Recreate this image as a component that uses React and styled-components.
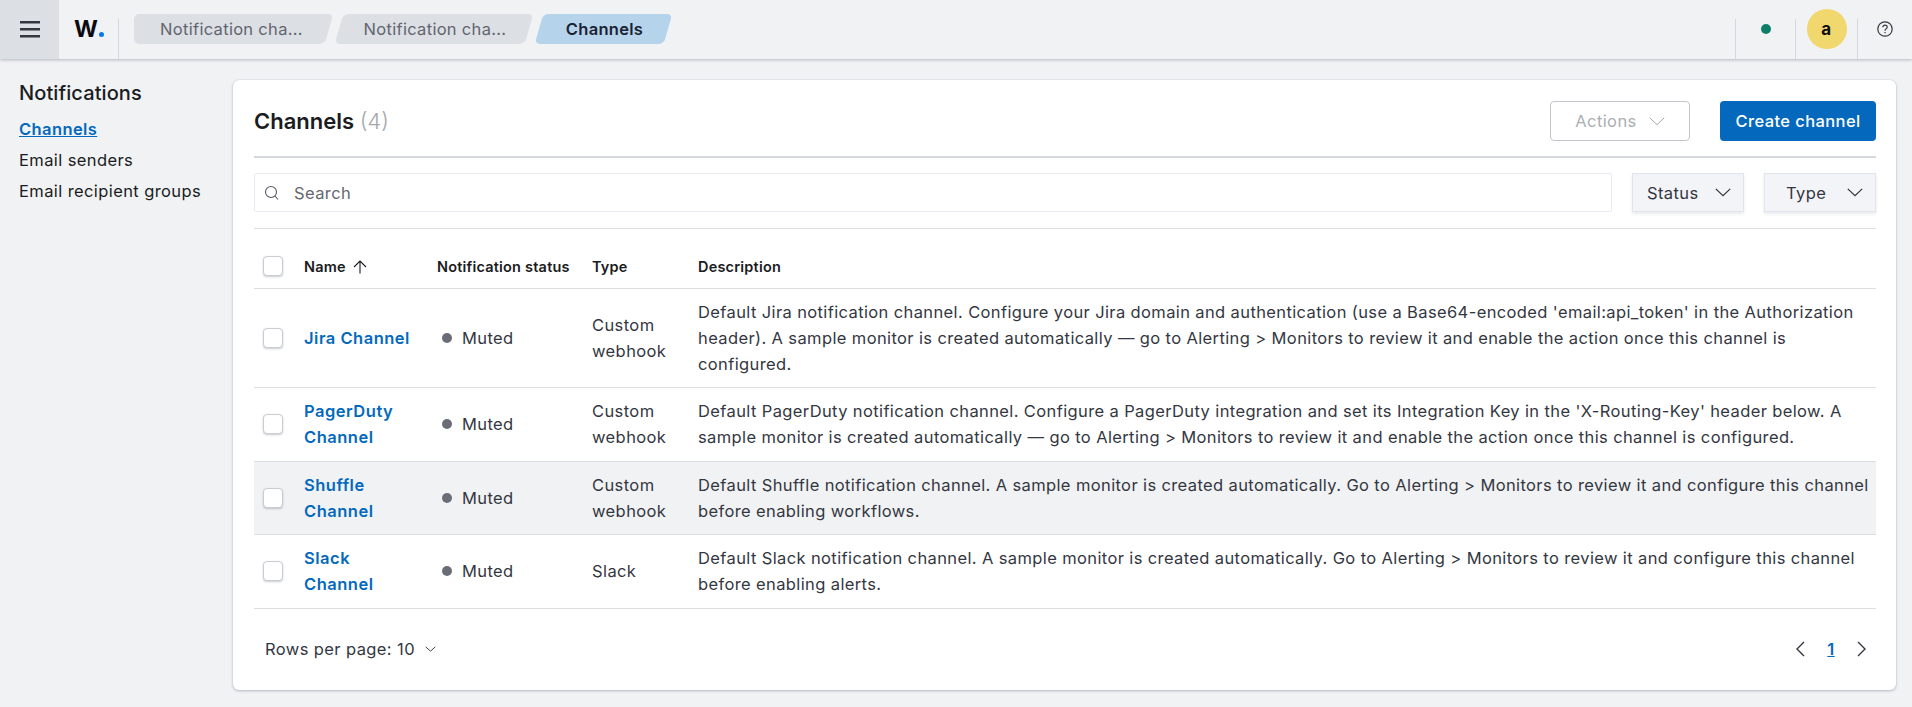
import React from 'react'
import styled, { createGlobalStyle } from 'styled-components'

const Global = createGlobalStyle`
  html, body { margin: 0; padding: 0; height: 100%; overflow: hidden; background: #f1f2f4; }
  body { font-family: Inter, "Liberation Sans", sans-serif; font-size: 16.5px; letter-spacing: 0.4px; color: #343741; }
  * { box-sizing: border-box; }
`

const Page = styled.div`
  width: 1912px;
  height: 707px;
  background: #f1f2f4;
`
const Header = styled.header`
  height: 59px;
  display: flex;
  align-items: stretch;
  background: #f1f2f4;
  box-shadow: 0 1px 3px rgba(40, 50, 70, 0.3);
`
const MenuButton = styled.div`
  width: 59px;
  display: flex;
  align-items: center;
  justify-content: center;
  background: #dcdfe3;
`
const Logo = styled.div`
  width: 59px;
  height: 37px;
  padding-left: 15px;
  display: flex;
  align-items: flex-end;
  font-size: 23px;
  line-height: 22px;
  font-weight: 700;
  color: #0b0c10;
  letter-spacing: 0;
  span { line-height: 16px; }
  i {
    width: 5.5px;
    height: 5.5px;
    margin-left: 1px;
    border-radius: 50%;
    background: #0a77e8;
  }
`
const Crumbs = styled.nav`
  flex: 1;
  display: flex;
  align-items: flex-start;
  gap: 10px;
  padding-left: 16px;
  margin-top: 19px;
  position: relative;
  &::before { content: ""; position: absolute; left: 0; top: 0; bottom: 0; width: 1px; background: #d6d8dd; }
`
const Crumb = styled.div`
  position: relative;
  margin-top: -5px;
  width: ${p => p.$w}px;
  height: 30px;
  display: flex;
  align-items: center;
  justify-content: center;
  padding-left: ${p => (p.$first ? 0 : 2)}px;
  letter-spacing: 0.3px;
  font-weight: ${p => (p.$active ? 600 : 400)};
  color: ${p => (p.$active ? '#1a2333' : '#62656e')};
  z-index: 0;
  &::before {
    content: "";
    position: absolute;
    inset: ${p => (p.$first ? '0 0 0 20px' : '0')};
    z-index: -1;
    border-radius: 5px;
    background: ${p => (p.$active ? '#b6d3ec' : '#dcdfe4')};
    transform: skewX(-16deg);
  }
  ${p => p.$first && `
    &::after {
      content: "";
      position: absolute;
      left: 0; top: 0; bottom: 0;
      width: 40px;
      z-index: -1;
      border-radius: 5px 0 0 5px;
      background: #dcdfe4;
    }
  `}
`
const HeaderSlot = styled.div`
  width: ${p => p.$w}px;
  margin-top: 19px;
  border-left: 1px solid #d6d8dd;
  display: flex;
  justify-content: center;
`
const StatusDot = styled.span`
  width: 10px;
  height: 10px;
  margin-top: 5px;
  border-radius: 50%;
  background: #0e7e67;
`
const Avatar = styled.div`
  width: 40px;
  height: 40px;
  margin-top: -10px;
  border-radius: 50%;
  background: #f0d86e;
  color: #0b0c10;
  font-size: 17px;
  font-weight: 700;
  display: flex;
  align-items: center;
  justify-content: center;
`
const HelpIcon = styled.svg`
  width: 16px;
  height: 16px;
  margin-top: 2px;
`

const Body = styled.div`
  display: flex;
  align-items: flex-start;
`
const Sidebar = styled.aside`
  width: 233px;
  padding: 21px 0 0 19px;
`
const SideTitle = styled.div`
  font-size: 20px;
  line-height: 26px;
  font-weight: 500;
  letter-spacing: 0.1px;
  color: #1a1c21;
  margin-bottom: 8px;
`
const SideLink = styled.div`
  line-height: 31px;
  color: ${p => (p.$active ? '#0469bd' : '#1a1c21')};
  font-weight: ${p => (p.$active ? 600 : 400)};
  text-decoration: ${p => (p.$active ? 'underline' : 'none')};
`
const Card = styled.main`
  width: 1663px;
  height: 610px;
  margin-top: 21px;
  padding: 21px 20px 0 21px;
  background: #fff;
  border-radius: 6px;
  box-shadow: 0 1px 3px rgba(40, 50, 70, 0.28), 0 0 1px rgba(40, 50, 70, 0.25);
`
const TitleRow = styled.div`
  display: flex;
  align-items: center;
  height: 40px;
  gap: 30px;
`
const Title = styled.h1`
  flex: 1;
  margin: 0;
  font-size: 22px;
  font-weight: 600;
  letter-spacing: 0;
  color: #1a1c21;
  span { font-weight: 300; color: #a6a8ad; }
`
const ActionsButton = styled.div`
  width: 140px;
  height: 40px;
  display: flex;
  align-items: center;
  justify-content: center;
  gap: 12px;
  border: 1px solid #c2c4ca;
  border-radius: 4px;
  color: #abaeb4;
`
const PrimaryButton = styled.div`
  width: 156px;
  height: 40px;
  display: flex;
  align-items: center;
  justify-content: center;
  border-radius: 4px;
  background: #0469bd;
  color: #fff;
  font-weight: 500;
`
const Rule = styled.div`
  height: ${p => p.$h}px;
  margin: ${p => p.$m};
  background: ${p => (p.$h > 1 ? '#d6d8e0' : '#dcdee2')};
`
const Toolbar = styled.div`
  display: flex;
  gap: 20px;
  height: 39px;
`
const Search = styled.div`
  flex: 1;
  display: flex;
  align-items: center;
  gap: 14px;
  padding-left: 9px;
  border: 1px solid #e7eaf4;
  border-radius: 2px;
  color: #646770;
`
const Filter = styled.div`
  width: 112px;
  display: flex;
  align-items: center;
  justify-content: space-between;
  padding: 0 12px 0 ${p => p.$pl}px;
  background: #f3f4f7;
  border: 1px solid #e1e4ee;
  box-shadow: 0 2px 3px rgba(40, 50, 70, 0.1);
  color: #343741;
`
const Table = styled.table`
  width: 100%;
  margin-top: 16px;
  border-collapse: collapse;
  table-layout: fixed;
`
const Th = styled.th`
  height: 43px;
  padding: 0 8px;
  text-align: left;
  font-size: 14.5px;
  font-weight: 600;
  letter-spacing: 0.2px;
  color: #1a1c21;
  border-bottom: 1px solid #dcdee2;
  white-space: nowrap;
  svg { vertical-align: -2px; margin-left: 3px; }
`
const Row = styled.tr`
  background: ${p => (p.$hover ? '#f1f2f4' : 'transparent')};
`
const Td = styled.td`
  height: ${p => p.$h}px;
  padding: 0 8px;
  line-height: 26px;
  color: #343741;
  border-bottom: 1px solid #dcdee2;
`
const DescCell = styled(Td)`
  white-space: nowrap;
  letter-spacing: 0.38px;
`
const Check = styled.div`
  width: 20px;
  height: 20px;
  margin-left: 1px;
  background: #fff;
  border: 1px solid #c9ccd2;
  border-radius: 4px;
  box-shadow: 0 1px 2px rgba(40, 50, 70, 0.25);
`
const NameLink = styled.span`
  color: #0469bd;
  font-weight: 600;
  letter-spacing: 0.5px;
`
const Muted = styled.div`
  display: flex;
  align-items: center;
  gap: 10px;
  padding-left: 5px;
  &::before { content: ""; width: 10px; height: 10px; border-radius: 50%; background: #6a6d76; }
`
const Footer = styled.div`
  height: 81px;
  display: flex;
  align-items: center;
  justify-content: space-between;
  padding: 0 10px 0 11px;
`
const RowsPer = styled.div`
  display: flex;
  align-items: center;
  gap: 10px;
  color: #343741;
`
const Pager = styled.div`
  display: flex;
  align-items: center;
  gap: 20px;
`
const PageNum = styled.span`
  width: 12px;
  text-align: center;
  color: #0469bd;
  font-weight: 600;
  text-decoration: underline;
`

const SearchIcon = () => (
  <svg width="16" height="16" viewBox="0 0 16 16" fill="none" stroke="#555a64" strokeWidth="1.1">
    <circle cx="7" cy="7" r="5.5" />
    <path d="M11 11l3 3.5" />
  </svg>
)

const MenuIcon = () => (
  <svg width="20" height="17" viewBox="0 0 20 17" fill="#343741">
    <rect y="0" width="20" height="2.5" />
    <rect y="7" width="20" height="2.5" />
    <rect y="14" width="20" height="2.5" />
  </svg>
)

const Chevron = ({ w = 16, sw = 1.4, color = '#343741' }) => (
  <svg width={w} height={w / 2 + 1} viewBox={`-0.5 -0.5 ${w + 1} ${w / 2 + 2}`} fill="none" stroke={color} strokeWidth={sw}>
    <path d={`M0 0.5L${w / 2} ${w / 2}L${w} 0.5`} />
  </svg>
)

const PagerArrow = ({ flip }) => (
  <svg width="9" height="16" viewBox="0 0 9 16" fill="none" stroke="#343741" strokeWidth="1.4">
    <path d={flip ? 'M1 1l7 7-7 7' : 'M8 1L1 8l7 7'} />
  </svg>
)

const SortArrow = () => (
  <svg width="14" height="14" viewBox="0 0 14 14" fill="none" stroke="#1a1c21" strokeWidth="1.1">
    <path d="M7 13.5V1M1 7l6-6 6 6" />
  </svg>
)

const channels = [
  {
    name: ['Jira Channel'],
    type: ['Custom', 'webhook'],
    h: 99,
    desc: [
      "Default Jira notification channel. Configure your Jira domain and authentication (use a Base64-encoded 'email:api_token' in the Authorization",
      'header). A sample monitor is created automatically — go to Alerting > Monitors to review it and enable the action once this channel is',
      'configured.',
    ],
  },
  {
    name: ['PagerDuty', 'Channel'],
    type: ['Custom', 'webhook'],
    h: 74,
    desc: [
      "Default PagerDuty notification channel. Configure a PagerDuty integration and set its Integration Key in the 'X-Routing-Key' header below. A",
      'sample monitor is created automatically — go to Alerting > Monitors to review it and enable the action once this channel is configured.',
    ],
  },
  {
    name: ['Shuffle', 'Channel'],
    type: ['Custom', 'webhook'],
    h: 73,
    hover: true,
    desc: [
      'Default Shuffle notification channel. A sample monitor is created automatically. Go to Alerting > Monitors to review it and configure this channel',
      'before enabling workflows.',
    ],
  },
  {
    name: ['Slack', 'Channel'],
    type: ['Slack'],
    h: 74,
    desc: [
      'Default Slack notification channel. A sample monitor is created automatically. Go to Alerting > Monitors to review it and configure this channel',
      'before enabling alerts.',
    ],
  },
]

const Lines = ({ items }) =>
  items.map((line, i) => (
    <React.Fragment key={i}>
      {i > 0 && <br />}
      {line}
    </React.Fragment>
  ))

export default function App() {
  return (
    <Page>
      <Global />
      <Header>
        <MenuButton>
          <MenuIcon />
        </MenuButton>
        <Logo>
          <span>W</span>
          <i />
        </Logo>
        <Crumbs>
          <Crumb $w={195} $first>Notification cha...</Crumb>
          <Crumb $w={190}>Notification cha...</Crumb>
          <Crumb $w={129} $active>Channels</Crumb>
        </Crumbs>
        <HeaderSlot $w={60}>
          <StatusDot />
        </HeaderSlot>
        <HeaderSlot $w={62}>
          <Avatar>a</Avatar>
        </HeaderSlot>
        <HeaderSlot $w={55}>
          <HelpIcon viewBox="0 0 16 16" fill="none" stroke="#343741" strokeWidth="1.2">
            <circle cx="8" cy="8" r="7.2" />
            <path d="M5.8 6.2c0-1.3 1-2.1 2.2-2.1s2.2.8 2.2 2c0 1.9-2.2 1.7-2.2 3.6" />
            <path d="M8 11v1.2" />
          </HelpIcon>
        </HeaderSlot>
      </Header>
      <Body>
        <Sidebar>
          <SideTitle>Notifications</SideTitle>
          <SideLink $active>Channels</SideLink>
          <SideLink>Email senders</SideLink>
          <SideLink>Email recipient groups</SideLink>
        </Sidebar>
        <Card>
          <TitleRow>
            <Title>
              Channels <span>(4)</span>
            </Title>
            <ActionsButton>
              Actions <Chevron color="#a4a7ad" sw={1.1} />
            </ActionsButton>
            <PrimaryButton>Create channel</PrimaryButton>
          </TitleRow>
          <Rule $h={2} $m="15px 0 15px" />
          <Toolbar>
            <Search>
              <SearchIcon />
              Search
            </Search>
            <Filter $pl={14}>
              Status <Chevron />
            </Filter>
            <Filter $pl={21}>
              Type <Chevron />
            </Filter>
          </Toolbar>
          <Rule $h={1} $m="16px 0 0" />
          <Table>
            <colgroup>
              <col style={{ width: 42 }} />
              <col style={{ width: 133 }} />
              <col style={{ width: 155 }} />
              <col style={{ width: 106 }} />
              <col />
            </colgroup>
            <thead>
              <tr>
                <Th><Check /></Th>
                <Th>Name <SortArrow /></Th>
                <Th>Notification status</Th>
                <Th>Type</Th>
                <Th>Description</Th>
              </tr>
            </thead>
            <tbody>
              {channels.map(c => (
                <Row key={c.name[0]} $hover={c.hover}>
                  <Td $h={c.h}><Check /></Td>
                  <Td $h={c.h}><NameLink><Lines items={c.name} /></NameLink></Td>
                  <Td $h={c.h}><Muted>Muted</Muted></Td>
                  <Td $h={c.h}><Lines items={c.type} /></Td>
                  <DescCell $h={c.h}><Lines items={c.desc} /></DescCell>
                </Row>
              ))}
            </tbody>
          </Table>
          <Footer>
            <RowsPer>
              Rows per page: 10 <Chevron w={11} sw={1.1} />
            </RowsPer>
            <Pager>
              <PagerArrow />
              <PageNum>1</PageNum>
              <PagerArrow flip />
            </Pager>
          </Footer>
        </Card>
      </Body>
    </Page>
  )
}
